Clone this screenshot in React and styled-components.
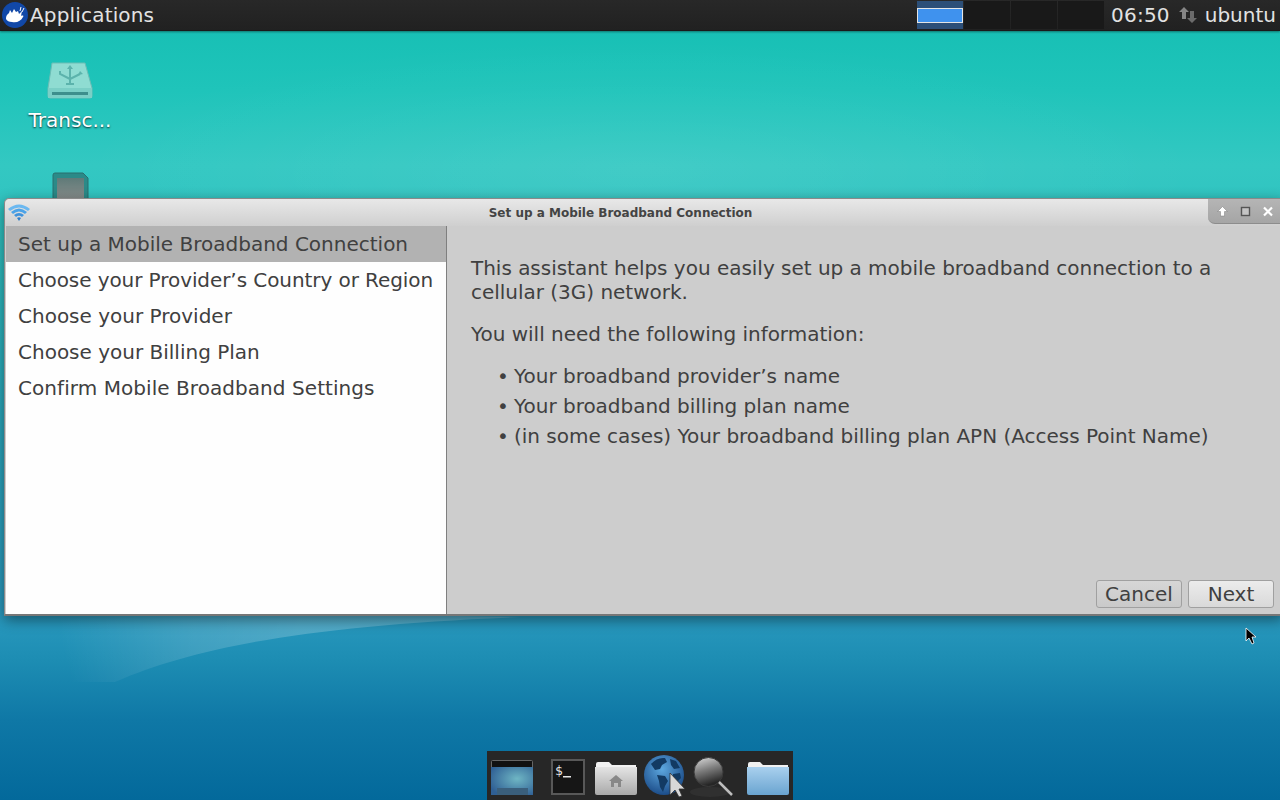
import React from 'react'
import styled, { createGlobalStyle } from 'styled-components'

const Global = createGlobalStyle`
html,body{margin:0;padding:0;height:100%;overflow:hidden;}
body{font-family:"DejaVu Sans",sans-serif;}
`

const Desktop = styled.div`
position:relative;
width:1280px;
height:800px;
overflow:hidden;
background:
  radial-gradient(ellipse 560px 130px at 640px 170px,rgba(255,255,255,.07),rgba(255,255,255,0)),
  linear-gradient(180deg,#18c0b5 30px,#1fc4ba 90px,#33c8c2 165px,#2fc0c0 240px,#2aa8bd 420px,#2a9abf 610px,#1d8db3 660px,#0f78a6 720px,#03699b 800px);
`

const Panel = styled.div`
height:30px;
background:linear-gradient(180deg,#282828,#212121);
border-bottom:1px solid #1a1a1a;
box-shadow:0 1px 2px rgba(0,0,0,.4);
display:flex;
align-items:center;
color:#e2e2e2;
font-size:20px;
`

const AppMenu = styled.div`
display:flex;
align-items:center;
gap:1px;
padding-left:1px;
flex:1;
letter-spacing:.17px;
`

const Pager = styled.div`
display:flex;
height:28px;
margin-right:6px;
`

const Workspace = styled.div`
width:46px;
height:28px;
margin-right:1px;
background:${p => (p.$active ? '#2c4f78' : '#191919')};
display:flex;
align-items:center;
justify-content:center;
`

const PagerWindow = styled.div`
width:44px;
height:13px;
background:#3f92ee;
border:1px solid #e4e4e4;
`

const Clock = styled.span`
letter-spacing:.2px;
`

const Tray = styled.div`
display:flex;
align-items:center;
justify-content:center;
width:26px;
height:26px;
margin:0 4px 0 5px;
`

const User = styled.span`
margin-right:4px;
`

const Icons = styled.div`
width:140px;
display:flex;
flex-direction:column;
align-items:center;
padding-top:31px;
`

const IconLabel = styled.div`
color:#fff;
font-size:20px;
line-height:24px;
margin-top:8px;
text-shadow:0 1px 2px rgba(0,0,0,.8);
`

const SdIcon = styled.div`
margin-top:40px;
`

const Swoosh = styled.svg`
position:absolute;
left:0;
top:600px;
`

const Window = styled.div`
position:absolute;
left:4px;
top:198px;
width:1280px;
height:418px;
box-sizing:border-box;
background:#cdcdcd;
border:1px solid #8a8a8a;
border-bottom:2px solid #777;
border-radius:5px 0 0 0;
box-shadow:0 4px 14px rgba(0,0,0,.45);
display:flex;
flex-direction:column;
`

const TitleBar = styled.div`
position:relative;
height:27px;
flex:none;
background:linear-gradient(180deg,#e8e8e8,#cfcfcf);
border-radius:5px 0 0 0;
display:flex;
align-items:center;
justify-content:center;
padding-right:47px;
box-sizing:border-box;
font-size:12px;
font-weight:bold;
color:#444;
`

const TitleIcon = styled.svg`
position:absolute;
left:2px;
top:3px;
`

const WindowButtons = styled.div`
position:absolute;
left:1203px;
top:0;
width:73px;
height:25px;
background:linear-gradient(180deg,#b5b5b5,#a5a5a5);
border-radius:0 0 0 7px;
border-bottom:1px solid #8c8c8c;
display:flex;
align-items:center;
gap:12px;
padding-left:9px;
box-sizing:border-box;
`

const Body = styled.div`
flex:1;
display:flex;
min-height:0;
padding-left:1px;
`

const Steps = styled.div`
width:441px;
flex:none;
background:#fefefe;
border-right:1px solid #7f7f7f;
box-sizing:border-box;
`

const Step = styled.div`
height:36px;
line-height:36px;
padding-left:12px;
font-size:20px;
color:#404040;
white-space:nowrap;
letter-spacing:${p => p.$track || 0}px;
background:${p => (p.$current ? '#b2b2b2' : 'transparent')};
`

const Content = styled.div`
flex:1;
position:relative;
padding:30px 24px 0 24px;
color:#404040;
font-size:20px;
line-height:24px;
`

const Para = styled.p`
margin:0 0 18px 0;
width:770px;
letter-spacing:-.02px;
`

const Bullets = styled.ul`
list-style:none;
margin:-3px 0 0 0;
padding:0 0 0 26px;
`

const Bullet = styled.li`
height:30px;
line-height:30px;
white-space:nowrap;
letter-spacing:-.02px;
&::before{
    content:'•';
    display:inline-block;
    width:17px;
}
`

const Actions = styled.div`
position:absolute;
left:649px;
top:354px;
display:flex;
gap:6px;
`

const Button = styled.button`
font-family:inherit;
font-size:20px;
color:#404040;
height:28px;
padding:0;
width:${p => p.$w}px;
border:1px solid #a0a0a0;
border-radius:3px;
background:${p => (p.$flat ? 'linear-gradient(180deg,#d6d6d6,#c9c9c9)' : 'linear-gradient(180deg,#ececec,#d9d9d9)')};
`

const Cursor = styled.svg`
position:absolute;
left:1245px;
top:627px;
`

const Dock = styled.div`
position:absolute;
left:487px;
top:751px;
width:306px;
height:49px;
background:#272727;
display:flex;
align-items:flex-start;
`

const DockSlot = styled.div`
width:${p => p.$w || 51}px;
height:49px;
flex:none;
`

const Logo = () => (
  <svg width="28" height="28" viewBox="0 0 28 28">
    <circle cx="14" cy="14" r="13" fill="#1148a8" />
    <path d="M5 18 C5 14 7 13 8 12 L9 9 L11 12 L13 8 L15 11 L17 10 L18 13 L21 10 L20 15 C22 14 23 15 22 16 C20 20 16 22 11 21 C8 21 6 20 5 18Z" fill="#fff" />
    <path d="M20 6 L19 10 M23 7 L21 11" stroke="#fff" strokeWidth="1" />
  </svg>
)

const UsbDrive = () => (
  <svg width="50" height="38" viewBox="0 0 50 38">
    <path d="M7 1 H40 L47 26 V34 Q47 36 45 36 H5 Q3 36 3 34 V26Z" fill="#8fdcd2" stroke="#6cbdb5" />
    <rect x="3" y="26" width="44" height="10" fill="#7bcfc6" />
    <rect x="7" y="30" width="36" height="3" fill="#3d8f8c" />
    <path d="M25 5 V21 M21 22 H29 M25 17 L15 12 V9 M25 17 L35 12" stroke="#5cb3ac" strokeWidth="2" fill="none" />
    <path d="M25 3 L28 7 H22Z M35 9 L38 12 L33 13Z" fill="#5cb3ac" />
  </svg>
)

const SdCard = () => (
  <svg width="38" height="40" viewBox="0 0 38 40">
    <defs>
      <linearGradient id="sd" x1="0" y1="0" x2="0" y2="1">
        <stop offset="0" stopColor="#5f7a78" />
        <stop offset="1" stopColor="#a09a98" />
      </linearGradient>
    </defs>
    <path d="M2 3 Q2 1 4 1 H32 L37 6 V40 H2Z" fill="#2b8a88" stroke="#2a6f6e" />
    <rect x="6" y="6" width="27" height="34" fill="url(#sd)" />
  </svg>
)

const TrayArrows = () => (
  <svg width="18" height="18" viewBox="0 0 18 18">
    <path d="M5 1 L10 6 H7 V13 H3 V6 H0Z" fill="#858585" />
    <path d="M13 17 L8 12 H11 V5 H15 V12 H18Z" fill="#6b6b6b" />
  </svg>
)

const WifiIcon = () => (
  <TitleIcon width="24" height="20" viewBox="0 0 24 20">
    <path d="M1 7 Q12 -2 23 7 L21 9 Q12 2 3 9Z" fill="#6bb8f0" />
    <path d="M4 10 Q12 3 20 10 L18 12 Q12 7 6 12Z" fill="#4ba3e8" />
    <path d="M7 13 Q12 9 17 13 L15 15 Q12 12.5 9 15Z" fill="#3f93dc" />
    <path d="M10 16 Q12 14.5 14 16 L12 19Z" fill="#2f7fca" />
  </TitleIcon>
)

const UpBtn = () => (
  <svg width="11" height="11" viewBox="0 0 11 11">
    <path d="M5.5 0.5 L10.5 5.5 H7.5 V10 H3.5 V5.5 H0.5Z" fill="#fff" stroke="#7a7a7a" strokeWidth=".5" />
  </svg>
)

const MaxBtn = () => (
  <svg width="11" height="11" viewBox="0 0 11 11">
    <rect x="1.5" y="1.5" width="8" height="8" fill="#c4c4c4" stroke="#555" strokeWidth="1.4" />
  </svg>
)

const CloseBtn = () => (
  <svg width="11" height="11" viewBox="0 0 11 11">
    <path d="M1 1.5 L9 9.5 M9 1.5 L1 9.5" stroke="#fff" strokeWidth="2.2" />
  </svg>
)

const Screens = () => (
  <svg width="51" height="49" viewBox="0 0 51 49">
    <defs>
      <radialGradient id="sc" cx=".62" cy=".42" r=".7">
        <stop offset="0" stopColor="#6fb6c4" />
        <stop offset="1" stopColor="#2f5f94" />
      </radialGradient>
    </defs>
    <rect x="4.5" y="9.5" width="41" height="34" fill="#111" stroke="#666" rx="1" />
    <rect x="4" y="16" width="42" height="28" fill="url(#sc)" />
    <rect x="10" y="37" width="31" height="7" fill="#3a5f7c" />
  </svg>
)

const Terminal = () => (
  <svg width="51" height="49" viewBox="0 0 51 49">
    <rect x="14" y="9" width="32" height="34" fill="#161616" stroke="#585858" strokeWidth="2" />
    <text x="17" y="24" fill="#e8e8e8" fontFamily="DejaVu Sans Mono" fontSize="13">$</text>
    <rect x="25" y="25" width="8" height="1.5" fill="#e8e8e8" />
  </svg>
)

const HomeFolder = () => (
  <svg width="50" height="49" viewBox="0 0 50 49">
    <defs>
      <linearGradient id="hf" x1="0" y1="0" x2="0" y2="1">
        <stop offset="0" stopColor="#e4e4e4" />
        <stop offset="1" stopColor="#a9a9a9" />
      </linearGradient>
    </defs>
    <path d="M7 14 V13 Q7 11 9 11 H20 L23 14 H47 V18 H7Z" fill="#f2f2f2" />
    <path d="M6 16 H48 V42 Q48 44 46 44 H8 Q6 44 6 42Z" fill="url(#hf)" />
    <path d="M27 24 L34 30 H32 V36 H29 V32 H25 V36 H22 V30 H20Z" fill="#888" />
  </svg>
)

const Globe = () => (
  <svg width="50" height="49" viewBox="0 0 50 49">
    <defs>
      <radialGradient id="gb" cx=".45" cy=".35" r=".75">
        <stop offset="0" stopColor="#5da8e0" />
        <stop offset="1" stopColor="#123f7c" />
      </radialGradient>
    </defs>
    <circle cx="25" cy="24" r="20" fill="url(#gb)" />
    <path d="M12 13 Q18 6 26 7 L28 11 L23 14 L21 18 L16 19 Z M18 24 L26 25 L29 30 L26 35 L24 41 L21 36 L20 30 Z M31 8 L37 10 L41 17 L35 18 L32 14 Z M34 23 L41 22 L42 27 L38 31 L34 28Z" fill="#123a63" />
    <path d="M31 22 V44 L36 39 L40 46 L43 45 L40 38 L46 38Z" fill="#d8d8d8" stroke="#333" strokeWidth=".8" />
  </svg>
)

const Magnifier = () => (
  <svg width="50" height="49" viewBox="0 0 50 49">
    <defs>
      <linearGradient id="mg" x1="0" y1="0" x2=".3" y2="1">
        <stop offset="0" stopColor="#dedede" />
        <stop offset=".5" stopColor="#7d7d7d" />
        <stop offset="1" stopColor="#262626" />
      </linearGradient>
    </defs>
    <ellipse cx="21" cy="41" rx="20" ry="5" fill="#303030" />
    <circle cx="19.5" cy="21" r="14.5" fill="url(#mg)" stroke="#3a3a3a" />
    <path d="M30 31 L43 44" stroke="#bdbdbd" strokeWidth="2.5" />
  </svg>
)

const BlueFolder = () => (
  <svg width="54" height="49" viewBox="0 0 54 49">
    <defs>
      <linearGradient id="bf" x1="0" y1="0" x2="0" y2="1">
        <stop offset="0" stopColor="#a9d0ee" />
        <stop offset="1" stopColor="#6aa4d0" />
      </linearGradient>
    </defs>
    <path d="M9 14 V13 Q9 11 11 11 H21 L24 14 H49 V18 H9Z" fill="#f0f0f0" />
    <path d="M8 16 H50 V42 Q50 44 48 44 H10 Q8 44 8 42Z" fill="url(#bf)" />
  </svg>
)

const steps = [
  { text: 'Set up a Mobile Broadband Connection' },
  { text: 'Choose your Provider’s Country or Region', track: -0.075 },
  { text: 'Choose your Provider' },
  { text: 'Choose your Billing Plan' },
  { text: 'Confirm Mobile Broadband Settings', track: 0.06 },
]

const needs = [
  'Your broadband provider’s name',
  'Your broadband billing plan name',
  '(in some cases) Your broadband billing plan APN (Access Point Name)',
]

export default function App() {
  return (
    <Desktop>
      <Global />
      <Panel>
        <AppMenu>
          <Logo />
          <span>Applications</span>
        </AppMenu>
        <Pager>
          <Workspace $active><PagerWindow /></Workspace>
          <Workspace />
          <Workspace />
          <Workspace />
        </Pager>
        <Clock>06:50</Clock>
        <Tray><TrayArrows /></Tray>
        <User>ubuntu</User>
      </Panel>

      <Icons>
        <UsbDrive />
        <IconLabel>Transc...</IconLabel>
        <SdIcon><SdCard /></SdIcon>
      </Icons>

      <Swoosh width="640" height="100" viewBox="0 0 640 100">
        <defs>
          <linearGradient id="sw" gradientUnits="userSpaceOnUse" x1="70" y1="80" x2="300" y2="20">
            <stop offset="0" stopColor="#fff" stopOpacity="0" />
            <stop offset=".55" stopColor="#fff" stopOpacity=".14" />
            <stop offset="1" stopColor="#fff" stopOpacity=".2" />
          </linearGradient>
        </defs>
        <path d="M115 82 C200 45 320 25 520 17 L60 10 L60 82Z" fill="url(#sw)" />
      </Swoosh>

      <Window>
        <TitleBar>
          <WifiIcon />
          Set up a Mobile Broadband Connection
          <WindowButtons>
            <UpBtn />
            <MaxBtn />
            <CloseBtn />
          </WindowButtons>
        </TitleBar>
        <Body>
          <Steps>
            {steps.map((s, i) => <Step key={s.text} $current={i === 0} $track={s.track}>{s.text}</Step>)}
          </Steps>
          <Content>
            <Para>This assistant helps you easily set up a mobile broadband connection to a cellular (3G) network.</Para>
            <Para>You will need the following information:</Para>
            <Bullets>
              {needs.map(n => <Bullet key={n}>{n}</Bullet>)}
            </Bullets>
            <Actions>
              <Button $w={86} $flat>Cancel</Button>
              <Button $w={86}>Next</Button>
            </Actions>
          </Content>
        </Body>
      </Window>

      <Cursor width="12" height="18" viewBox="0 0 12 18">
        <path d="M1 1 V14 L4 11 L7 17 L9 16 L7 10 H11Z" fill="#000" stroke="#fff" strokeWidth=".8" />
      </Cursor>

      <Dock>
        <DockSlot $w={51}><Screens /></DockSlot>
        <DockSlot $w={51}><Terminal /></DockSlot>
        <DockSlot $w={50}><HomeFolder /></DockSlot>
        <DockSlot $w={50}><Globe /></DockSlot>
        <DockSlot $w={50}><Magnifier /></DockSlot>
        <DockSlot $w={54}><BlueFolder /></DockSlot>
      </Dock>
    </Desktop>
  )
}
